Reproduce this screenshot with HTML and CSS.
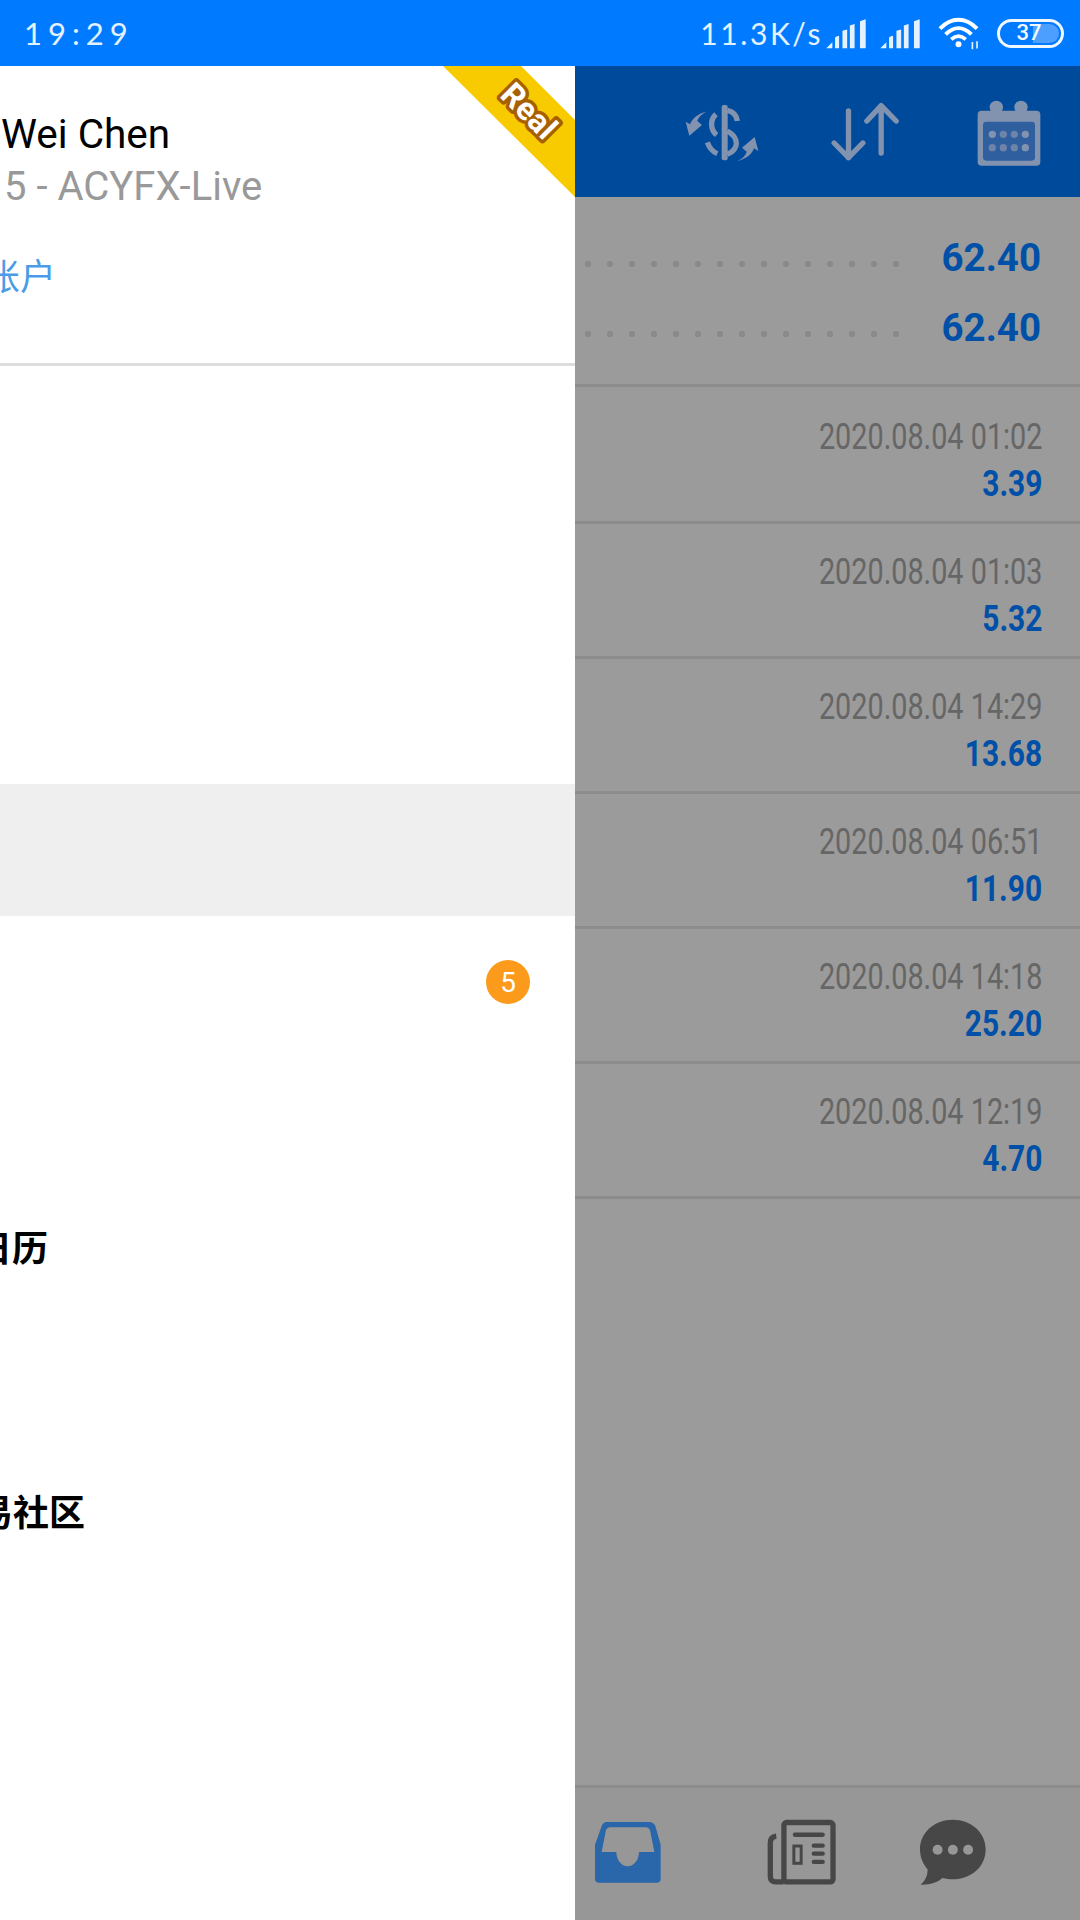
FILE: index.html
```html
<!DOCTYPE html>
<html lang="zh">
<head>
<meta charset="utf-8">
<title>Drawer</title>
<link rel="stylesheet" href="styles.css">
</head>
<body>
<div class="screen">
  <header class="status">
    <span class="clock">19:29</span>
    <div class="status-right">
      <span class="speed">11.3K/s</span>
      <svg class="signal" viewBox="778 50 120 92"><path d="M778 140 L796 122 V140Z M804 140 V110 Q804 106 808 105 L816 103 V140Z M826 140 V88 L840 84 V140Z M848 140 V72 L862 68 V140Z M878 140 V60 L895 54 V140Z"/></svg>
      <svg class="signal second" viewBox="940 50 120 92"><path d="M940 140 L958 122 V140Z M966 140 V110 Q966 106 970 105 L978 103 V140Z M988 140 V88 L1002 84 V140Z M1010 140 V72 L1024 68 V140Z M1040 140 V60 L1057 54 V140Z"/></svg>
      <svg class="wifi" viewBox="1105 50 130 102">
        <path class="arc" d="M1114 88 C1148 52 1192 52 1226 88"/>
        <path class="arc" d="M1131 105 C1156 80 1184 80 1209 105"/>
        <path class="arc thin" d="M1148 120 C1162 108 1178 108 1192 120"/>
        <circle class="wifi-dot" cx="1170" cy="135" r="9"/>
        <path class="wifi-small" d="M1212 128 V150 M1226 126 V148"/>
      </svg>
      <div class="battery"><span class="battery-fill"></span><span class="battery-num">37</span></div>
    </div>
  </header>

  <div class="stage">
    <aside class="drawer">
      <div class="drawer-inner">
        <section class="profile">
          <div class="name">Wei Chen</div>
          <div class="server">5 - ACYFX-Live</div>
          <div class="manage">管理账户</div>
        </section>
        <nav class="menu">
          <div class="menu-row"></div>
          <div class="menu-row"></div>
          <div class="menu-row"></div>
          <div class="menu-row active"></div>
          <div class="menu-row"><span class="badge">5</span></div>
          <div class="menu-row"></div>
          <div class="menu-row"><span class="menu-label calendar">经济日历</span></div>
          <div class="menu-row"></div>
          <div class="menu-row"><span class="menu-label community">交易社区</span></div>
          <div class="menu-row"></div>
        </nav>
      </div>
      <svg class="ribbon" viewBox="0 0 132 132">
        <polygon class="ribbon-band" points="0,0 78,0 132,54 132,131"/>
        <text class="ribbon-text" x="0" y="0" transform="translate(86 45) rotate(45)" text-anchor="middle" dominant-baseline="central">Real</text>
      </svg>
    </aside>

    <main class="panel">
      <div class="toolbar">
        <div class="tool">
          <svg class="tool-icon" width="75" height="60" viewBox="345 300 225 180">
            <rect class="ic-fill" x="455" y="306" width="18" height="166" rx="6"/>
            <path class="ic-line" d="M472 322 C490 326 500 336 502 354"/>
            <path class="ic-line" d="M438 334 C420 350 420 380 440 396"/>
            <path class="ic-line" d="M472 384 C508 404 508 438 472 454"/>
            <path class="ic-line" d="M412 418 C418 434 428 446 442 452"/>
            <path class="ic-fill" d="M410 326 C392 334 384 346 382 354 L396 366 L358 398 L347 356 L360 364 C366 346 385 331 410 326Z"/>
            <path class="ic-fill" d="M410 326 C392 334 384 346 382 354 L396 366 L358 398 L347 356 L360 364 C366 346 385 331 410 326Z" transform="rotate(180 456 400)"/>
          </svg>
        </div>
        <div class="tool">
          <svg class="tool-icon" width="70" height="62" viewBox="785 305 205 186">
            <path class="ic-arrow" d="M835 332 V472 M792 428 L835 472 L878 428"/>
            <path class="ic-arrow" d="M933 458 V316 M890 362 L933 316 L978 362"/>
          </svg>
        </div>
        <div class="tool">
          <svg class="tool-icon" width="64" height="66" viewBox="1220 293 192 198">
            <rect class="ic-fill" x="1222" y="325" width="188" height="165" rx="12"/>
            <circle class="ic-fill" cx="1278" cy="315" r="20"/>
            <circle class="ic-fill" cx="1352" cy="315" r="20"/>
            <rect class="cal-window" x="1238" y="358" width="156" height="117" rx="10"/>
            <g class="cal-dots">
              <circle class="ic-fill" cx="1266" cy="396" r="11"/><circle cx="1299" cy="396" r="11"/><circle cx="1332" cy="396" r="11"/><circle class="ic-fill" cx="1365" cy="396" r="11"/>
              <circle cx="1266" cy="436" r="11"/><circle cx="1299" cy="436" r="11"/><circle cx="1332" cy="436" r="11"/><circle class="ic-fill" cx="1365" cy="436" r="11"/>
            </g>
          </svg>
        </div>
      </div>

      <section class="summary">
        <div class="sum-row"><span class="dots"></span><span class="sum-val">62.40</span></div>
        <div class="sum-row"><span class="dots"></span><span class="sum-val">62.40</span></div>
      </section>

      <section class="deals">
        <div class="deal"><span class="deal-date">2020.08.04 01:02</span><span class="deal-val">3.39</span></div>
        <div class="deal"><span class="deal-date">2020.08.04 01:03</span><span class="deal-val">5.32</span></div>
        <div class="deal"><span class="deal-date">2020.08.04 14:29</span><span class="deal-val">13.68</span></div>
        <div class="deal"><span class="deal-date">2020.08.04 06:51</span><span class="deal-val">11.90</span></div>
        <div class="deal"><span class="deal-date">2020.08.04 14:18</span><span class="deal-val">25.20</span></div>
        <div class="deal"><span class="deal-date">2020.08.04 12:19</span><span class="deal-val">4.70</span></div>
      </section>

      <div class="spacer"></div>

      <footer class="tabs">
        <svg class="tab inbox" width="66" height="61" viewBox="75 182 198 183">
          <path class="inbox-shape" fill-rule="evenodd" d="M110 182 H238 Q250 182 256 194 L272 250 V352 Q272 364 260 364 H87 Q75 364 75 352 V250 L95 194 Q100 182 110 182Z M120 198 H228 Q236 198 240 206 L253 272 H207 C207 295 192 315 173 315 C154 315 139 295 139 272 H95 L108 206 Q112 198 120 198Z"/>
        </svg>
        <svg class="tab news" width="69" height="66" viewBox="590 173 208 198">
          <rect class="news-line" x="641" y="183" width="148" height="179" rx="8"/>
          <path class="news-line" d="M618 224 Q600 226 600 244 V346 Q600 362 616 362 H640"/>
          <path class="news-text" d="M674 220 H758 M731 253 H758 M731 277 H758 M731 302 H758"/>
          <rect class="news-box" x="671" y="254" width="22" height="52"/>
        </svg>
        <svg class="tab chat" width="66" height="66" viewBox="1050 173 199 199">
          <path class="chat-shape" d="M1149 175 C1205 175 1248 214 1248 265 C1248 316 1205 355 1149 355 C1138 355 1128 353 1118 351 C1102 365 1078 372 1052 371 C1066 358 1073 344 1073 325 C1059 309 1050 288 1050 265 C1050 214 1093 175 1149 175Z"/>
          <circle class="chat-dot" cx="1103" cy="266" r="15"/>
          <circle class="chat-dot" cx="1149" cy="266" r="15"/>
          <circle class="chat-dot" cx="1195" cy="266" r="15"/>
        </svg>
      </footer>
    </main>
  </div>
</div>
</body>
</html>
```

FILE: styles.css
```css
* { box-sizing: border-box; }
html, body { margin: 0; padding: 0; }
body { font-family: Roboto, "Noto Sans CJK SC", sans-serif; background: #9b9b9b; }

.screen { width: 1080px; height: 1920px; display: flex; flex-direction: column; overflow: hidden; }

/* status bar */
.status {
  height: 66px; flex: none; background: #007bff; color: #e4f2ff;
  display: flex; align-items: center; justify-content: space-between;
  padding: 0 16px 0 24px;
}
.clock { font-family: Lato, sans-serif; font-weight: 400; font-size: 31px; letter-spacing: 6px; }
.status-right { display: flex; align-items: center; }
.speed { font-family: Lato, sans-serif; font-weight: 400; font-size: 30px; letter-spacing: 2.6px; margin-right: 3px; }
.signal { width: 41px; height: 31px; fill: #e4f2ff; }
.signal.second { margin-left: 13px; }
.wifi { width: 43px; height: 34px; margin-left: 16px; fill: none; }
.arc { stroke: #fff; stroke-width: 12; fill: none; }
.arc.thin { stroke-width: 11; }
.wifi-dot { fill: #fff; }
.wifi-small { stroke: #e4f2ff; stroke-width: 5; }
.battery {
  position: relative; width: 67px; height: 29px; margin-left: 17px;
  border: 3px solid #f0f8ff; border-radius: 15px; overflow: hidden;
  display: flex; align-items: center; justify-content: center;
}
.battery-fill { position: absolute; top: 2px; bottom: 2px; right: 2px; width: 26px; background: #4d9fff; border-radius: 0 11px 11px 0; }
.battery-num { position: relative; font-size: 22px; font-weight: 500; color: #f2f8ff; margin-right: 3px; line-height: 1; }

.stage { flex: 1; display: flex; min-height: 0; }

/* drawer */
.drawer { position: relative; width: 575px; flex: none; background: #fff; overflow: hidden; }
.drawer-inner { width: 675px; margin-left: -100px; }
.profile { height: 300px; padding: 46px 0 0 101px; border-bottom: 3px solid #ddd; }
.name { font-size: 40.5px; line-height: 44px; color: #000; }
.server { font-size: 40px; line-height: 44px; color: #999; margin-top: 9px; padding-left: 3px; }
.manage {
  font-family: "Noto Sans CJK SC", sans-serif; font-size: 36px; line-height: 44px; color: #4a9be8;
  margin: 43px 0 0 -89px;
}
.menu { padding-top: 22px; }
.menu-row { height: 132px; display: flex; align-items: center; justify-content: flex-end; padding-right: 45px; }
.menu-row.active { background: #efefef; }
.menu-label {
  font-family: "Noto Sans CJK SC", sans-serif; font-weight: 700; font-size: 36px; line-height: 44px; color: #000;
  margin-right: auto;
}
.calendar { margin-left: 4px; }
.community { margin-left: 41px; }
.badge {
  width: 44px; height: 44px; border-radius: 50%; background: #fb9a1b; color: #fff;
  font-size: 28px; display: flex; align-items: center; justify-content: center;
}
.ribbon { position: absolute; top: 0; right: 0; width: 132px; height: 132px; }
.ribbon-band { fill: #f7cb00; }
.ribbon-text {
  font-family: Roboto, sans-serif; font-weight: 700; font-size: 32px; fill: #fff;
  stroke: #a85f00; stroke-width: 7px; stroke-linejoin: round; paint-order: stroke;
}

/* right panel */
.panel { flex: 1; min-width: 0; display: flex; flex-direction: column; background: #9b9b9b; }
.toolbar { height: 131px; flex: none; background: #004a9c; display: flex; justify-content: flex-end; }
.tool { width: 143px; display: flex; align-items: center; justify-content: center; }
.tool-icon { margin-top: 2px; }
.ic-fill { fill: #8293b0; }
.ic-line { fill: none; stroke: #8293b0; stroke-width: 16; }
.ic-arrow { fill: none; stroke: #8293b0; stroke-width: 16; stroke-linecap: round; stroke-linejoin: round; }
.cal-window { fill: #2f5f9f; }
.cal-dots { fill: #6e83a8; }

.summary { height: 190px; padding: 25px 39px 0 10px; border-bottom: 3px solid #8c8c8c; flex: none; }
.sum-row { height: 70px; display: flex; align-items: center; }
.dots {
  width: 318px; height: 6px; margin-top: 14px;
  background: radial-gradient(circle 3px at 3px 3px, #8a8a8a 98%, transparent) 0 0 / 22px 6px repeat-x;
}
.sum-val { margin-left: auto; font-size: 38.5px; font-weight: 700; color: #0050a8; }

.deals { flex: none; }
.deal {
  height: 135px; padding: 25px 38px 0 0; border-bottom: 3px solid #8c8c8c;
  display: flex; flex-direction: column; align-items: flex-end;
}
.deal:first-child { height: 137px; padding-top: 27px; }
.deal-date { font-size: 36px; line-height: 46px; color: #666; transform: scaleX(.8); transform-origin: right center; }
.deal-val { font-size: 36px; line-height: 48px; font-weight: 700; color: #0050a8; transform: scaleX(.83); transform-origin: right center; }

.spacer { flex: 1; }
.tabs {
  height: 135px; flex: none; background: #979797; border-top: 3px solid #8c8c8c;
  display: flex; align-items: center; padding: 0 0 4px 20px;
}
.inbox { margin-right: 106px; }
.news { margin-right: 84px; }
.inbox-shape { fill: #2a66aa; }
.news-line { fill: none; stroke: #474747; stroke-width: 16; }
.news-text { fill: none; stroke: #474747; stroke-width: 13; stroke-linecap: round; }
.news-box { fill: #979797; stroke: #474747; stroke-width: 9; }
.chat-shape { fill: #474747; }
.chat-dot { fill: #979797; }
```
